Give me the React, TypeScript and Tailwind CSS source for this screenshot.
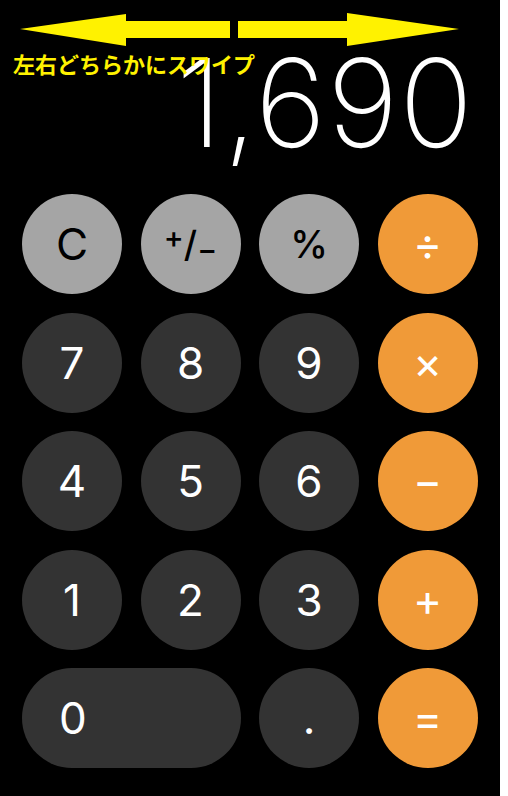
import type { ReactNode } from "react";

type Variant = "gray" | "dark" | "orange";

const variantClass: Record<Variant, string> = {
	gray: "bg-[#a5a5a5] text-black",
	dark: "bg-[#333333] text-white",
	orange: "bg-[#f09a38] text-white",
};

function Key({
	children,
	variant = "dark",
	wide = false,
}: {
	children: ReactNode;
	variant?: Variant;
	wide?: boolean;
}) {
	return (
		<button
			type="button"
			className={`flex h-[100px] items-center rounded-full text-[44px] leading-none ${variantClass[variant]} ${
				wide ? "col-span-2 justify-start pl-[37px]" : "w-[100px] justify-center"
			}`}
		>
			{children}
		</button>
	);
}

function SwipeHint() {
	return (
		<div className="pointer-events-none absolute inset-x-0 top-0">
			{/* 左右の矢印 */}
			<svg width="500" height="50" viewBox="0 0 500 50" className="block">
				<polygon
					points="20,29 126,14 126,21 230,21 230,38 126,38 126,46"
					fill="#fff200"
				/>
				<polygon
					points="238,21 347,21 347,13 459,29 347,46 347,38 238,38"
					fill="#fff200"
				/>
			</svg>
			<p className="ml-[13px] font-['Noto_Sans_CJK_JP',sans-serif] text-[22px] font-bold leading-[26px] text-[#fff200]">
				左右どちらかにスワイプ
			</p>
		</div>
	);
}

export default function App() {
	return (
		<div className="flex h-[796px] w-[508px] bg-white">
			<div className="relative h-full w-[500px] bg-black font-['Inter',sans-serif]">
				{/* 表示部 */}
				<div className="flex h-[194px] items-end justify-end pb-[30px] pr-[26px]">
					<span className="text-[122px] font-extralight leading-none tracking-[1px] text-white">
						1,690
					</span>
				</div>

				<SwipeHint />

				{/* キーパッド */}
				<div className="ml-[22px] grid w-[456px] grid-cols-[repeat(4,100px)] gap-x-[18.5px] gap-y-[18.5px]">
					<Key variant="gray">C</Key>
					<Key variant="gray">
						<span className="text-[36px] font-medium">
							<span className="relative -top-[9px] text-[30px]">+</span>
							<span>/</span>
							<span className="relative top-[3px] text-[30px]">−</span>
						</span>
					</Key>
					<Key variant="gray">
						<span className="text-[38px] font-medium">%</span>
					</Key>
					<Key variant="orange">÷</Key>

					<Key>7</Key>
					<Key>8</Key>
					<Key>9</Key>
					<Key variant="orange">×</Key>

					<Key>4</Key>
					<Key>5</Key>
					<Key>6</Key>
					<Key variant="orange">−</Key>

					<Key>1</Key>
					<Key>2</Key>
					<Key>3</Key>
					<Key variant="orange">+</Key>

					<Key wide>0</Key>
					<Key>.</Key>
					<Key variant="orange">=</Key>
				</div>
			</div>
		</div>
	);
}
